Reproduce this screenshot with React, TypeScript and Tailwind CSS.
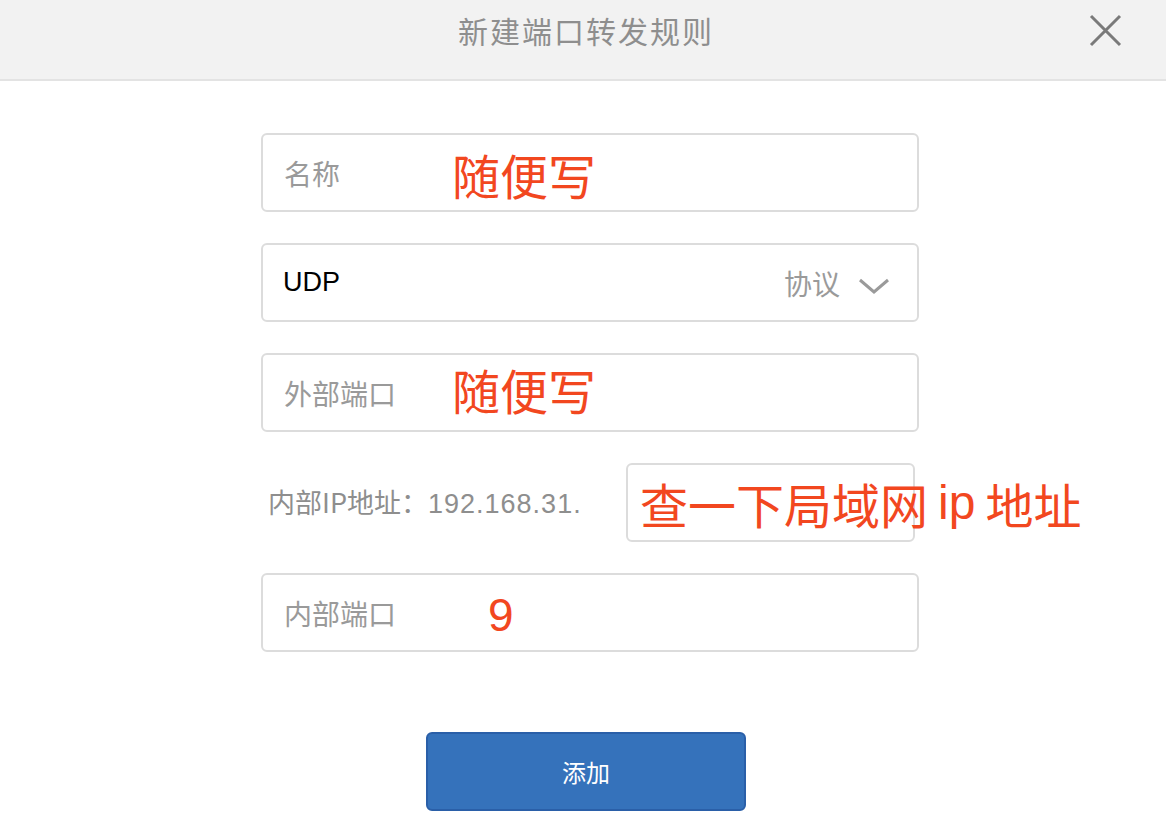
const cjk = { fontFamily: '"Noto Sans CJK SC", "Liberation Sans", sans-serif' };
const latin = { fontFamily: '"Liberation Sans", sans-serif' };

function Field({ label, note, noteOffset }: { label: string; note: string; noteOffset: string }) {
  return (
    <div className="flex h-[79px] items-center rounded-[6px] border-2 border-[#dcdcdc] bg-white pl-[21px]">
      <span className="w-[170px] text-[28px] leading-none text-[#9a9a9a]">{label}</span>
      <span className={`${noteOffset} text-[48px] leading-none text-[#f2471f]`}>{note}</span>
    </div>
  );
}

export default function App() {
  return (
    <div className="h-[840px] w-[1166px] overflow-hidden bg-white" style={cjk}>
      <header className="relative flex h-[81px] items-center justify-center border-b-2 border-[#e3e3e3] bg-[#f2f2f2]">
        <h1 className="-mt-[18px] ml-[6px] text-[30px] tracking-[2px] text-[#8e8e8e]">新建端口转发规则</h1>
        <button className="absolute right-[44px] top-[14px] h-[33px] w-[33px]">
          <svg viewBox="0 0 33 33" className="h-full w-full" fill="none" stroke="#7a7a7a" strokeWidth="3">
            <path d="M2 2 L31 31 M31 2 L2 31" />
          </svg>
        </button>
      </header>

      <div className="ml-[261px] mt-[52px] flex w-[658px] flex-col gap-[31px]">
        <Field label="名称" note="随便写" noteOffset="mt-[2px] -ml-[2px]" />

        <div className="flex h-[79px] items-center rounded-[6px] border-2 border-[#dcdcdc] bg-white pl-[20px] pr-[27px]">
          <span className="text-[27px] leading-none text-black" style={latin}>UDP</span>
          <span className="ml-auto text-[28px] leading-none text-[#9a9a9a]">协议</span>
          <svg viewBox="0 0 32 16" className="ml-[18px] mt-[6px] h-[16px] w-[32px]" fill="none" stroke="#9a9a9a" strokeWidth="3">
            <path d="M2 2 L16 14 L30 2" />
          </svg>
        </div>

        <Field label="外部端口" note="随便写" noteOffset="-ml-[2px] -mt-[8px]" />

        <div className="flex h-[79px] items-center">
          <span className="w-[365px] whitespace-nowrap pl-[7px] text-[27px] leading-none text-[#8e8e8e]">
            内部IP地址：<span className="tracking-[1px]" style={latin}>192.168.31.</span>
          </span>
          <div className="flex h-[79px] w-[289px] items-center rounded-[6px] border-2 border-[#dcdcdc] pl-[12px]">
            <span className="flex items-center whitespace-nowrap text-[48px] leading-none text-[#f2471f]">
              查一下局域网
              <span className="ml-[10px] mr-[10px]" style={latin}>ip</span>
              地址
            </span>
          </div>
        </div>

        <div className="flex h-[79px] items-center rounded-[6px] border-2 border-[#dcdcdc] bg-white pl-[21px]">
          <span className="w-[204px] text-[28px] leading-none text-[#9a9a9a]">内部端口</span>
          <span className="mt-[4px] text-[46px] leading-none text-[#f2471f]" style={latin}>9</span>
        </div>
      </div>

      <div className="ml-[426px] mt-[80px]">
        <button className="flex h-[79px] w-[320px] items-center justify-center rounded-[6px] border-2 border-[#2a5fa8] bg-[#3572bb] text-[24px] text-white">
          添加
        </button>
      </div>
    </div>
  );
}
